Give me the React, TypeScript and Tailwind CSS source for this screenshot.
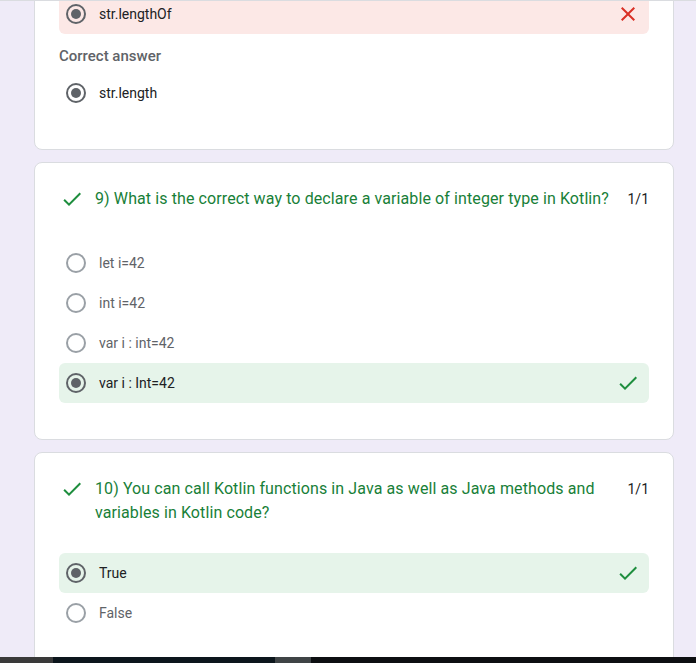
import React from 'react'

const font = { fontFamily: 'Roboto, "Liberation Sans", sans-serif' }

function Radio({ checked }: { checked?: boolean }) {
  return checked ? (
    <span className="flex h-5 w-5 shrink-0 items-center justify-center rounded-full border-2 border-[#5f6368]">
      <span className="h-2.5 w-2.5 rounded-full bg-[#5f6368]" />
    </span>
  ) : (
    <span className="h-5 w-5 shrink-0 rounded-full border-2 border-[#9aa0a6]" />
  )
}

function CheckIcon({ className }: { className?: string }) {
  return (
    <svg viewBox="0 0 24 24" className={className} fill="currentColor">
      <path d="M9 16.17L4.83 12l-1.42 1.41L9 19 21 7l-1.41-1.41z" />
    </svg>
  )
}

function CloseIcon({ className }: { className?: string }) {
  return (
    <svg viewBox="0 0 24 24" className={className} fill="currentColor">
      <path d="M19 6.41L17.59 5 12 10.59 6.41 5 5 6.41 10.59 12 5 17.59 6.41 19 12 13.41 17.59 19 19 17.59 13.41 12z" />
    </svg>
  )
}

type Opt = { label: string; checked?: boolean; state?: 'right' | 'wrong' }

function Option({ label, checked, state }: Opt) {
  const bg = state === 'right' ? 'bg-[#e6f4ea]' : state === 'wrong' ? 'bg-[#fce8e6]' : ''
  return (
    <div className={`flex h-10 items-center rounded-md pl-[7px] pr-[9px] ${bg}`}>
      <Radio checked={checked} />
      <span className={`ml-[13px] flex-1 text-[14px] ${checked ? 'text-[#202124]' : 'text-[#5f6368]'}`}>{label}</span>
      {state === 'right' && <CheckIcon className="h-6 w-6 text-[#1e8e3e]" />}
      {state === 'wrong' && <CloseIcon className="h-6 w-6 text-[#d93025]" />}
    </div>
  )
}

function Question({ title, options, wide }: { title: string; options: Opt[]; wide?: boolean }) {
  return (
    <div className="rounded-lg border border-[#dadce0] bg-white px-[24px] pt-[24px] pb-[36px]">
      <div className="flex items-start">
        <CheckIcon className="ml-[1px] h-6 w-6 shrink-0 text-[#1e8e3e]" />
        <div className="ml-[11px] mr-2 flex-1 text-[16px] leading-6 tracking-[0.1px] text-[#188038]">{title}</div>
        <div className="text-[14px] leading-6 text-[#202124]">1/1</div>
      </div>
      <div className={`${wide ? 'mt-[32px]' : 'mt-[28px]'} flex flex-col`}>
        {options.map((o) => (
          <Option key={o.label} {...o} />
        ))}
      </div>
    </div>
  )
}

export default function App() {
  return (
    <div className="flex h-[663px] w-full flex-col overflow-hidden bg-[#efebf8]" style={font}>
      <div className="flex-1 overflow-hidden border-t border-[#dadce0]">
        <div className="-mt-[16px] flex flex-col gap-3 pl-[34px] pr-[22px]">
          <div className="rounded-lg border border-[#dadce0] bg-white px-[24px] pt-[8px] pb-[36px]">
            <Option label="str.lengthOf" checked state="wrong" />
            <div className="mt-3 text-[15px] font-medium leading-5 text-[#5f6368]">Correct answer</div>
            <div className="mt-[7px]">
              <Option label="str.length" checked />
            </div>
          </div>
          <Question
            wide
            title="9) What is the correct way to declare a variable of integer type in Kotlin?"
            options={[
              { label: 'let i=42' },
              { label: 'int i=42' },
              { label: 'var i : int=42' },
              { label: 'var i : Int=42', checked: true, state: 'right' },
            ]}
          />
          <Question
            title="10) You can call Kotlin functions in Java as well as Java methods and variables in Kotlin code?"
            options={[
              { label: 'True', checked: true, state: 'right' },
              { label: 'False' },
            ]}
          />
        </div>
      </div>
      <div className="flex h-[6px] shrink-0">
        <div className="w-[53px] bg-[#3a3a3a]" />
        <div className="w-[222px] bg-[#0c161c]" />
        <div className="w-[36px] bg-[#3f4446]" />
        <div className="flex-1 bg-[#0d0f11]" />
      </div>
    </div>
  )
}
